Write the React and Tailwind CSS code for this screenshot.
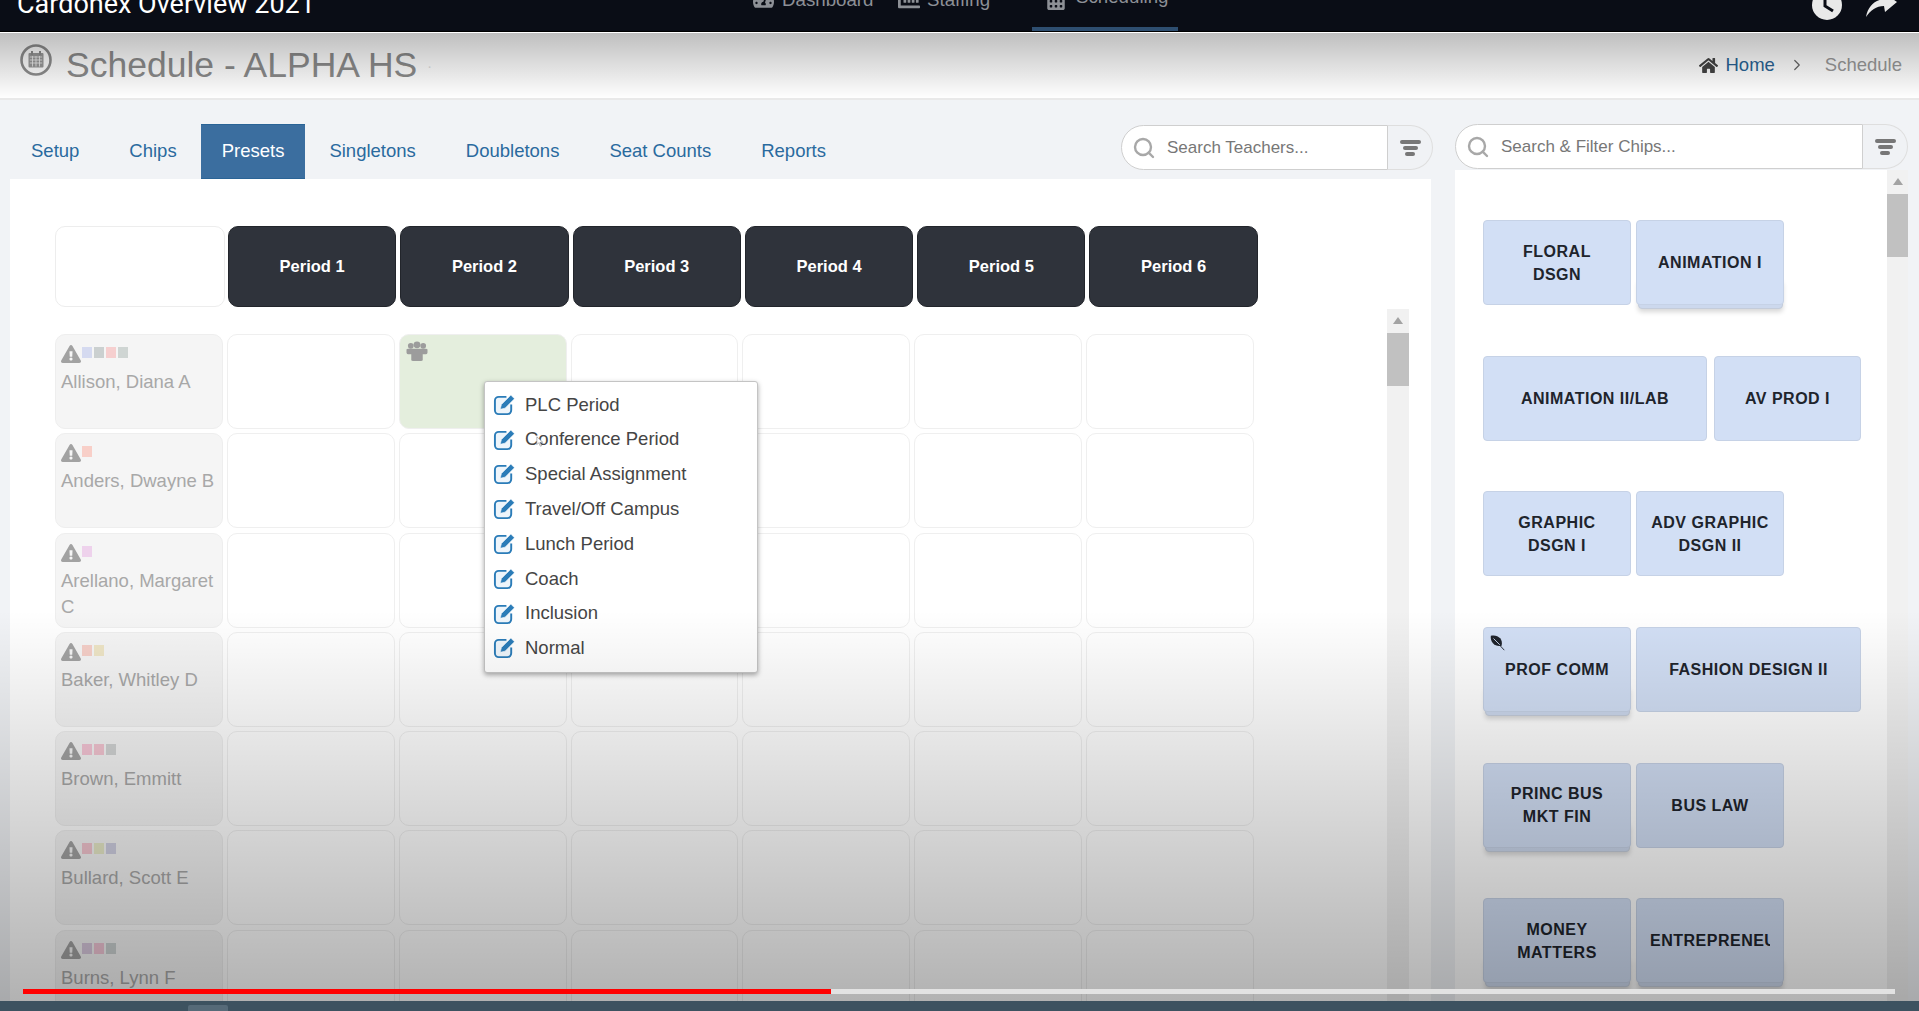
import React from "react";
import { FaHome, FaExclamationTriangle, FaCalendarAlt, FaTachometerAlt, FaChartBar } from "react-icons/fa";
import { Search, ChevronRight } from "lucide-react";

const PERIODS = ["Period 1", "Period 2", "Period 3", "Period 4", "Period 5", "Period 6"];

const TEACHERS = [
  { name: "Allison, Diana A", swatches: ["bg-[#d5daf0]", "bg-[#cbd0d0]", "bg-[#f6cfcf]", "bg-[#cfd5d3]"] },
  { name: "Anders, Dwayne B", swatches: ["bg-[#f8cfc8]"] },
  { name: "Arellano, Margaret C", swatches: ["bg-[#eed2ec]"] },
  { name: "Baker, Whitley D", swatches: ["bg-[#f5cfc8]", "bg-[#eee5c6]"] },
  { name: "Brown, Emmitt", swatches: ["bg-[#f6c6d6]", "bg-[#f4c6d2]", "bg-[#d2d4d4]"] },
  { name: "Bullard, Scott E", swatches: ["bg-[#f4c6d0]", "bg-[#e8eac8]", "bg-[#d0d0e2]"] },
  { name: "Burns, Lynn F", swatches: ["bg-[#d9c9de]", "bg-[#f2c6d6]", "bg-[#ccd2d2]"] },
];

const MENU = ["PLC Period", "Conference Period", "Special Assignment", "Travel/Off Campus", "Lunch Period", "Coach", "Inclusion", "Normal"];

const CHIP_ROWS = [
  [{ lines: ["FLORAL", "DSGN"] }, { lines: ["ANIMATION I"], stack: true }],
  [{ lines: ["ANIMATION II/LAB"], width: "w-[224px]" }, { lines: ["AV PROD I"], width: "w-[147px]", gap: true }],
  [{ lines: ["GRAPHIC", "DSGN I"] }, { lines: ["ADV GRAPHIC", "DSGN II"] }],
  [{ lines: ["PROF COMM"], stack: true, leaf: true }, { lines: ["FASHION DESIGN II"], width: "w-[225px]" }],
  [{ lines: ["PRINC BUS", "MKT FIN"], stack: true }, { lines: ["BUS LAW"] }],
  [{ lines: ["MONEY", "MATTERS"], stack: true }, { lines: ["ENTREPRENEUR"], stack: true }],
];

function FilterIcon() {
  return (
    <span className="flex flex-col items-center gap-[2px]">
      <span className="w-[21px] h-[4px] rounded-full bg-[#777]" />
      <span className="w-[15px] h-[4px] rounded-full bg-[#777]" />
      <span className="w-[10px] h-[4px] rounded-full bg-[#777]" />
    </span>
  );
}

function EditIcon() {
  return (
    <svg viewBox="0 0 24 24" className="w-[23px] h-[23px] shrink-0">
      <path d="M14 4 H6 a4 4 0 0 0 -4 4 V18 a4 4 0 0 0 4 4 H15 a4 4 0 0 0 4 -4 V12" fill="#eef5fb" stroke="#2b7cb8" strokeWidth="2" />
      <path d="M7.5 17 L8.8 12 L18.6 2.2 L22.4 6 L12.6 15.8 Z" fill="#2b7cb8" stroke="#fff" strokeWidth="0.6" />
    </svg>
  );
}

function GroupIcon() {
  return (
    <svg viewBox="0 0 22 22" className="w-[22px] h-[21px]">
      <circle cx="4.5" cy="5" r="3" fill="#9c9c9c" />
      <circle cx="17.5" cy="5" r="3" fill="#9c9c9c" />
      <circle cx="11" cy="4" r="3.6" fill="#9c9c9c" />
      <path d="M0 9 Q0 8 2 8 H20 Q22 8 22 9 V12 Q22 14 19 14 H17 V20 Q17 21 15 21 H7 Q5 21 5 20 V14 H3 Q0 14 0 12 Z" fill="#9c9c9c" />
    </svg>
  );
}

function SearchBox({ placeholder, inputWidth }) {
  return (
    <div className="flex h-[45px]">
      <div className={`${inputWidth} flex items-center gap-[11px] pl-[10px] bg-white border border-[#cfcfcf] rounded-l-[23px]`}>
        <Search size={24} strokeWidth={2.4} className="text-[#a8a8a8] shrink-0" />
        <span className="text-[17px] text-[#777]">{placeholder}</span>
      </div>
      <div className="w-[45px] flex items-center justify-center bg-[#f0f2f5] border border-l-0 border-[#dedede] rounded-r-[23px]">
        <FilterIcon />
      </div>
    </div>
  );
}

function ScrollBar({ width, thumbTop, thumbHeight }) {
  return (
    <div className={`${width} shrink-0 bg-[#f1f1f1] flex flex-col items-center`}>
      <span className="mt-[8px] w-0 h-0 border-x-[5px] border-x-transparent border-b-[7px] border-b-[#a3a3a3]" />
      <div className={`w-full bg-[#c1c1c1] ${thumbTop} ${thumbHeight}`} />
    </div>
  );
}

function Chip({ chip }) {
  const width = chip.width || "w-[148px]";
  return (
    <div className={`relative ${width} h-[85px] shrink-0 ${chip.gap ? "ml-[2px]" : ""}`}>
      {chip.stack && (
        <div className="absolute left-[2px] right-[1px] -bottom-[4px] h-[30px] rounded-[4px] bg-[#ccd8ed] border border-[#c4ccda] shadow-[0_3px_5px_rgba(0,0,0,0.16)]" />
      )}
      <div className="relative h-full flex flex-col justify-center px-[13px] bg-[#d2dff5] border border-[#c6d2e6] rounded-[4px] overflow-hidden">
        {chip.lines.map((line) => (
          <div key={line} className="text-center whitespace-nowrap overflow-hidden text-[16px] leading-[23px] font-bold tracking-[0.5px] text-[#20242c]">
            {line}
          </div>
        ))}
      </div>
      {chip.leaf && (
        <svg viewBox="0 0 20 20" className="absolute left-[6px] top-[7px] w-[18px] h-[18px]">
          <path d="M2 2 C9 0 16 5 14 13 C8 15 1 10 2 2 Z" fill="#20242c" />
          <path d="M5 5 L17 18" stroke="#20242c" strokeWidth="1" />
          <path d="M5 5 L12 12" stroke="#d2dff5" strokeWidth="1" />
        </svg>
      )}
    </div>
  );
}

function TeacherRow({ teacher, rowIndex }) {
  return (
    <div className="flex gap-[4px]">
      <div className="w-[168px] h-[95px] shrink-0 pl-[5px] pt-[10px] bg-[#f5f5f5] border border-[#eeeeee] rounded-[10px]">
        <div className="flex items-start h-[19px]">
          <FaExclamationTriangle size={20} className="text-[#a2a2a2] shrink-0 -mt-[1px]" />
          <div className="flex gap-[2px] mt-[2px] ml-[1px]">
            {teacher.swatches.map((s, i) => (
              <span key={i} className={`w-[10px] h-[11px] ${s}`} />
            ))}
          </div>
        </div>
        <div className="mt-[5px] text-[18.5px] leading-[26px] text-[#a8a8a8]">{teacher.name}</div>
      </div>
      {PERIODS.map((p, i) => (
        <div
          key={p}
          className={`w-[167.8px] h-[95px] shrink-0 border border-[#efefef] rounded-[10px] ${rowIndex === 0 && i === 1 ? "bg-[#e4eedd] pl-[6px] pt-[6px]" : "bg-white"}`}
        >
          {rowIndex === 0 && i === 1 && <GroupIcon />}
        </div>
      ))}
    </div>
  );
}

function ContextMenu() {
  return (
    <div className="absolute left-[429px] top-[47px] w-[274px] h-[292px] pt-[5px] bg-white border border-[#c4c4c4] rounded-[3px] shadow-[0_2px_5px_rgba(0,0,0,0.35)] z-10">
      {MENU.map((item) => (
        <div key={item} className="h-[34.8px] flex items-center pl-[8px] gap-[9px] text-[18.5px] text-[#454545]">
          <EditIcon />
          <span>{item}</span>
        </div>
      ))}
      {/* recorded mouse pointer */}
      <svg viewBox="0 0 10 14" className="absolute left-[51px] top-[54px] w-[8px] h-[11px]">
        <path d="M1 1 L1 11 L3.5 8.5 L5.5 13 L7 12.4 L5 8 L8.5 8 Z" fill="#fff" stroke="#8a8a8a" strokeWidth="0.8" />
      </svg>
    </div>
  );
}

export default function App() {
  return (
    <div className="relative w-full h-[1011px] overflow-hidden flex flex-col bg-[#f1f3f6] font-['Liberation_Sans',Arial,sans-serif]">
      {/* video title + app nav, cut off by the top of the frame */}
      <header className="h-[32px] shrink-0 flex bg-[#0a0d16] border-b border-black overflow-hidden">
        <div className="ml-[17px] w-[736px] shrink-0 -mt-[13px] font-['Roboto',sans-serif] text-[27px] leading-[34px] text-white">
          Cardonex Overview 2021
        </div>
        <div className="w-[145px] shrink-0 flex items-start gap-[8px] -mt-[11px] text-[18.7px] leading-[22px] text-[#8d9096]">
          <FaTachometerAlt size={21} />
          <span>Dashboard</span>
        </div>
        <div className="w-[134px] shrink-0 flex items-start gap-[7px] -mt-[11px] text-[18.7px] leading-[22px] text-[#8d9096]">
          <FaChartBar size={22} />
          <span>Staffing</span>
        </div>
        <div className="w-[146px] h-[32px] shrink-0 border-b-[5px] border-[#2e4e70] pl-[14px] flex items-start gap-[10px] text-[18.7px] leading-[22px] text-[#8d9096]">
          <FaCalendarAlt size={20} className="-mt-[10px] shrink-0" />
          <span className="-mt-[14px]">Scheduling</span>
        </div>
        <svg viewBox="0 0 30 30" className="ml-[634px] -mt-[10px] w-[30px] h-[30px] shrink-0">
          <circle cx="15" cy="15" r="15" fill="#e9e9e9" />
          <path d="M13 8 L13 16 L21 21" fill="none" stroke="#0a0d16" strokeWidth="3" />
        </svg>
        <svg viewBox="0 0 31 24" className="ml-[24px] -mt-[7px] w-[31px] h-[24px] shrink-0">
          <path d="M0 24 C2 13 9 7 18 6 L18 0 L31 9 L19 19 L18 13 C10 13 5 17 0 24 Z" fill="#e9e9e9" />
        </svg>
      </header>

      <div className="h-[68px] shrink-0 flex items-center bg-white border-b-2 border-[#e9e9e9] pl-[20px] pr-[17px]">
        <svg viewBox="0 0 32 32" className="w-[32px] h-[32px] shrink-0 -mt-[10px]">
          <circle cx="16" cy="16" r="14.5" fill="none" stroke="#8e8e8e" strokeWidth="2.6" />
          <rect x="8.5" y="9" width="15" height="14.5" rx="1" fill="#9a9a9a" />
          <path d="M9.8 13 H22.2 M9.8 16 H22.2 M9.8 19 H22.2 M12.5 12 V22.5 M16 12 V22.5 M19.5 12 V22.5" stroke="#f4f4f4" strokeWidth="0.8" />
          <rect x="11" y="7" width="2" height="4" fill="#8e8e8e" />
          <rect x="19" y="7" width="2" height="4" fill="#8e8e8e" />
        </svg>
        <h1 className="ml-[14px] mt-[2px] text-[35.5px] text-[#8c8c8c]">Schedule - ALPHA HS</h1>
        <span className="ml-[10px] mt-[3px] text-[14px] text-[#dddddd]">·</span>
        <div className="ml-auto flex items-center text-[18.5px]">
          <FaHome size={19} className="text-[#444]" />
          <span className="ml-[7px] text-[#2a6496]">Home</span>
          <ChevronRight size={18} strokeWidth={1.6} className="ml-[13px] text-[#666]" />
          <span className="ml-[19px] text-[#9a9a9a]">Schedule</span>
        </div>
      </div>

      <main className="flex-1 min-h-0 flex pl-[10px]">
        <section className="w-[1421px] shrink-0 flex flex-col">
          <div className="h-[79px] shrink-0 pt-[24px] flex items-start">
            <nav className="flex gap-[8px] text-[18.5px] text-[#2a6a9e]">
              {["Setup", "Chips", "Presets", "Singletons", "Doubletons", "Seat Counts", "Reports"].map((t) =>
                t === "Presets" ? (
                  <div key={t} className="h-[55px] px-[21px] pb-[1px] -mx-[5px] flex items-center bg-[#3b6e9f] border-t border-b border-[#2a6496] text-white">{t}</div>
                ) : (
                  <div key={t} className="h-[55px] px-[21px] pb-[1px] flex items-center">{t}</div>
                )
              )}
            </nav>
            <div className="ml-auto mt-[1px] -mr-[2px]">
              <SearchBox placeholder="Search Teachers..." inputWidth="w-[267px]" />
            </div>
          </div>

          <div className="flex-1 min-h-0 bg-white pt-[47px] pl-[45px] flex flex-col">
            <div className="flex gap-[4px] h-[81px] shrink-0">
              <div className="w-[170px] -mr-[1px] shrink-0 bg-white border border-[#ededed] rounded-[10px]" />
              {PERIODS.map((p) => (
                <div key={p} className="w-[168.3px] shrink-0 flex items-center justify-center bg-[#2f333b] border border-[#22252b] rounded-[10px] text-[16.5px] font-bold text-white">
                  {p}
                </div>
              ))}
            </div>
            <div className="flex-1 min-h-0 mt-[2px] flex">
              <div className="w-[1332px] shrink-0 pt-[25px] overflow-hidden">
                <div className="relative flex flex-col gap-[4.3px]">
                  {TEACHERS.map((t, i) => (
                    <TeacherRow key={t.name} teacher={t} rowIndex={i} />
                  ))}
                  <ContextMenu />
                </div>
              </div>
              <ScrollBar width="w-[22px]" thumbTop="mt-[9px]" thumbHeight="h-[53px]" />
            </div>
          </div>
        </section>

        <aside className="ml-[24px] w-[453px] shrink-0 flex flex-col">
          <div className="h-[70px] shrink-0 pt-[24px]">
            <SearchBox placeholder="Search & Filter Chips..." inputWidth="w-[408px]" />
          </div>
          <div className="flex-1 min-h-0 flex">
            <div className="w-[432px] shrink-0 bg-white pt-[50px] pl-[28px] overflow-hidden flex flex-col gap-[50.7px]">
              {CHIP_ROWS.map((row, i) => (
                <div key={i} className="flex gap-[5px]">
                  {row.map((chip) => (
                    <Chip key={chip.lines[0]} chip={chip} />
                  ))}
                </div>
              ))}
            </div>
            <ScrollBar width="w-[21px]" thumbTop="mt-[9px]" thumbHeight="h-[63px]" />
          </div>
        </aside>
      </main>

      <footer className="h-[10px] shrink-0 bg-[#3d5260] pl-[188px] pt-[4px]">
        <div className="w-[40px] h-[6px] bg-[#566a78] rounded-t-[2px]" />
      </footer>

      {/* player shading that sits over the recording */}
      <div className="absolute left-0 right-0 top-[33px] h-[66px] bg-[linear-gradient(to_bottom,rgba(0,0,0,0.25),rgba(0,0,0,0))] pointer-events-none z-20" />
      <div className="absolute left-0 right-0 top-[610px] h-[391px] bg-[linear-gradient(to_bottom,rgba(0,0,0,0),rgba(0,0,0,0.3))] pointer-events-none z-20" />

      <div className="absolute left-[23px] top-[989px] w-[1872px] h-[5px] bg-[#e2e2e2] z-30">
        <div className="w-[808px] h-full bg-[#ff0000]" />
      </div>
    </div>
  );
}
